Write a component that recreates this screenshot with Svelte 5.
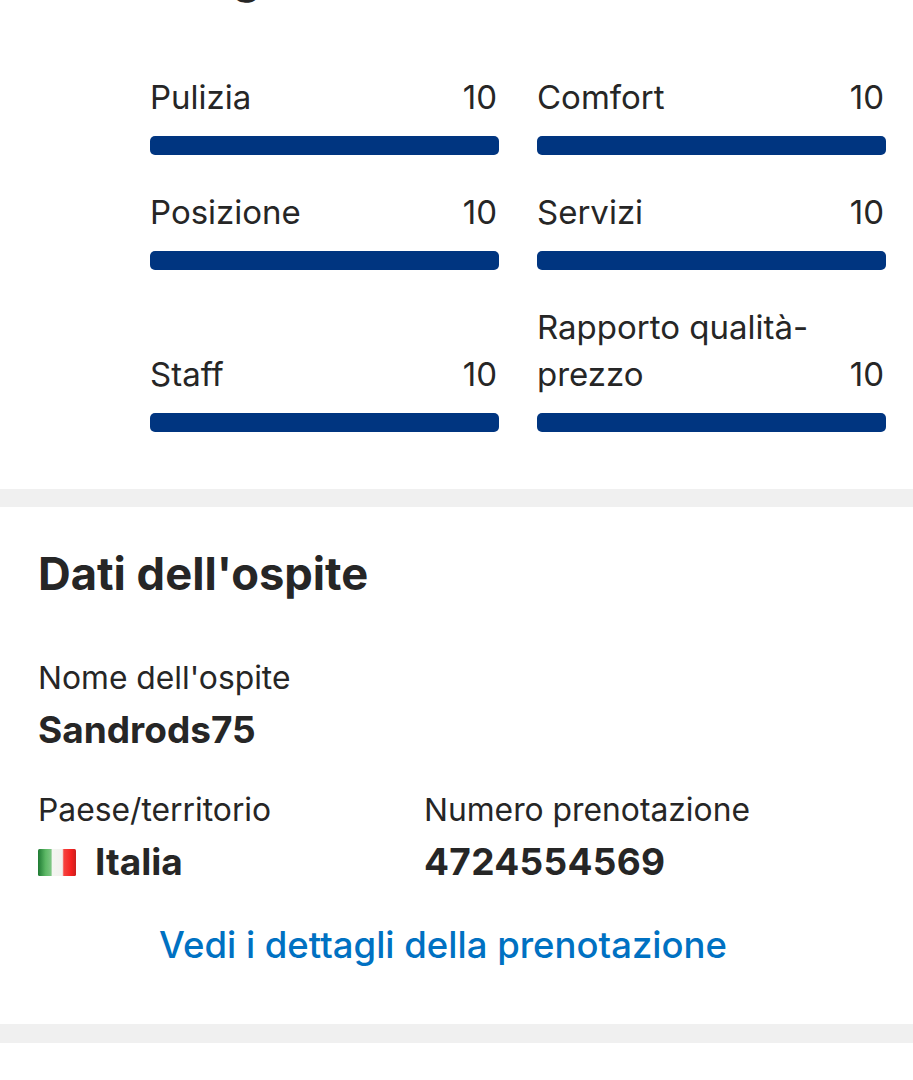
<script>
	const scores = [
		{ label: 'Pulizia', value: 10 },
		{ label: 'Comfort', value: 10 },
		{ label: 'Posizione', value: 10 },
		{ label: 'Servizi', value: 10 },
		{ label: 'Staff', value: 10 },
		{ label: 'Rapporto qualità-prezzo', value: 10 }
	];
</script>

<div class="page">
	<section class="scores">
		<h2 class="clipped">Più dettagli</h2>
		<div class="grid">
			{#each scores as s}
				<div class="score">
					<div class="head">
						<span class="label">{s.label}</span>
						<span class="value">{s.value}</span>
					</div>
					<div class="bar"></div>
				</div>
			{/each}
		</div>
	</section>

	<div class="band"></div>

	<section class="guest">
		<h2>Dati dell'ospite</h2>
		<div class="field name">
			<div class="key">Nome dell'ospite</div>
			<div class="val">Sandrods75</div>
		</div>
		<div class="two">
			<div class="field">
				<div class="key">Paese/territorio</div>
				<div class="val country">
					<svg width="38" height="27" viewBox="0 0 38 27" aria-hidden="true">
						<defs>
							<linearGradient id="flag" x1="0" x2="1" y1="0" y2="0">
								<stop offset="0" stop-color="#1e7a33" />
								<stop offset="0.2" stop-color="#5cb865" />
								<stop offset="0.34" stop-color="#7cc582" />
								<stop offset="0.38" stop-color="#f4f5f1" />
								<stop offset="0.64" stop-color="#f1f1ee" />
								<stop offset="0.68" stop-color="#f6433f" />
								<stop offset="0.88" stop-color="#f4201f" />
								<stop offset="1" stop-color="#c9201f" />
							</linearGradient>
						</defs>
						<rect width="38" height="27" rx="1.5" fill="url(#flag)" />
					</svg>
					<span>Italia</span>
				</div>
			</div>
			<div class="field">
				<div class="key">Numero prenotazione</div>
				<div class="val number">4724554569</div>
			</div>
		</div>
		<a class="link" href="#details">Vedi i dettagli della prenotazione</a>
	</section>

	<div class="band last"></div>
</div>

<style>
	:global(body) {
		margin: 0;
		background: #fff;
	}
	.page {
		height: 1080px;
		overflow: hidden;
		font-family: Inter, 'Liberation Sans', sans-serif;
		color: #262626;
	}
	h2 {
		margin: 0;
		font-size: 45.3px;
		line-height: 50px;
		font-weight: 700;
	}
	.clipped {
		margin-top: -48px;
		padding-left: 38px;
	}
	.scores {
		display: flow-root;
		height: 489px;
		padding-left: 150px;
		padding-right: 27px;
	}
	.scores .clipped {
		margin-left: -150px;
	}
	.grid {
		display: grid;
		grid-template-columns: 349px 349px;
		column-gap: 38px;
		row-gap: 34px;
		margin-top: 72px;
	}
	.score {
		display: flex;
		flex-direction: column;
		justify-content: flex-end;
	}
	.head {
		display: flex;
		justify-content: space-between;
		align-items: flex-end;
		font-size: 33px;
		line-height: 47px;
		padding-right: 2px;
		margin-bottom: 15px;
	}
	.label {
		max-width: 280px;
	}
	.bar {
		height: 19px;
		border-radius: 5px;
		background: #003580;
	}
	.band {
		height: 18px;
		background: #f0f0f0;
	}
	.band.last {
		height: 19px;
	}
	.guest {
		height: 517px;
		padding: 42px 38px 0;
		box-sizing: border-box;
	}
	.field {
		display: flex;
		flex-direction: column;
	}
	.name {
		margin-top: 59px;
	}
	.key {
		font-size: 31.8px;
		line-height: 40px;
	}
	.val {
		font-size: 37px;
		line-height: 44px;
		font-weight: 700;
		margin-top: 10px;
	}
	.number {
		letter-spacing: 0.3px;
	}
	.two {
		display: grid;
		grid-template-columns: 386px 1fr;
		margin-top: 38px;
	}
	.country {
		display: flex;
		align-items: center;
		gap: 19px;
	}
	.link {
		display: block;
		margin-top: 39px;
		text-align: center;
		padding-right: 27px;
		font-size: 36.5px;
		line-height: 44px;
		font-weight: 500;
		color: #0071c2;
		text-decoration: none;
	}
</style>
